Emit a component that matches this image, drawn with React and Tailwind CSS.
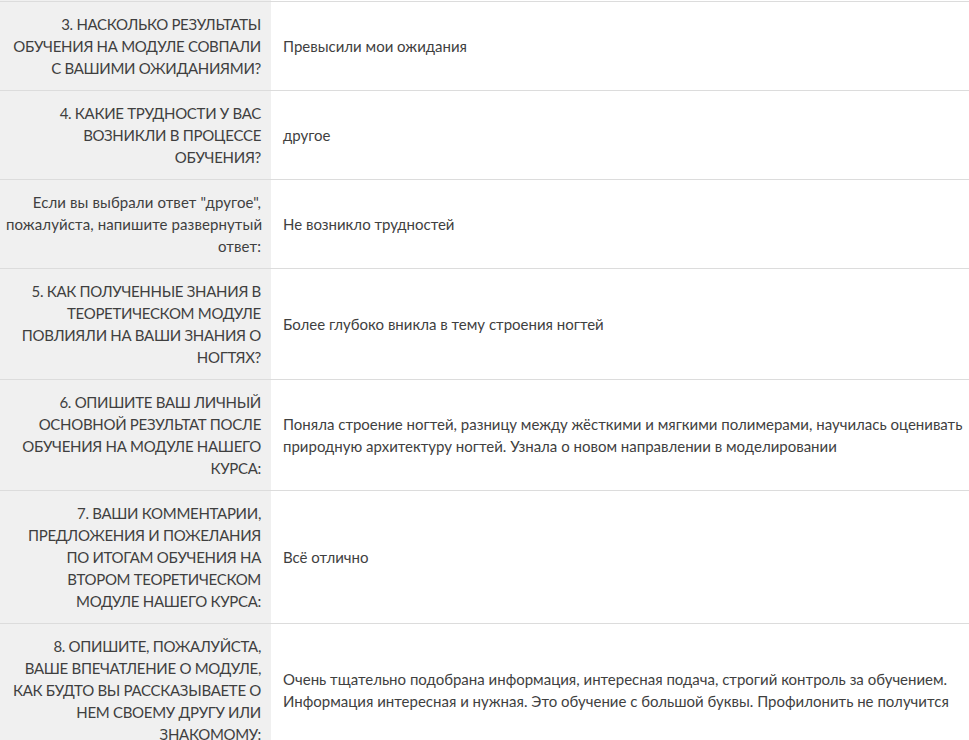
import React from "react";

const rows = [
  {
    q: ["3. НАСКОЛЬКО РЕЗУЛЬТАТЫ", "ОБУЧЕНИЯ НА МОДУЛЕ СОВПАЛИ", "С ВАШИМИ ОЖИДАНИЯМИ?"],
    a: ["Превысили мои ожидания"],
    up: true,
  },
  {
    q: ["4. КАКИЕ ТРУДНОСТИ У ВАС", "ВОЗНИКЛИ В ПРОЦЕССЕ", "ОБУЧЕНИЯ?"],
    a: ["другое"],
    up: true,
  },
  {
    q: ["Если вы выбрали ответ \"другое\",", "пожалуйста, напишите развернутый", "ответ:"],
    a: ["Не возникло трудностей"],
    up: false,
  },
  {
    q: ["5. КАК ПОЛУЧЕННЫЕ ЗНАНИЯ В", "ТЕОРЕТИЧЕСКОМ МОДУЛЕ", "ПОВЛИЯЛИ НА ВАШИ ЗНАНИЯ О", "НОГТЯХ?"],
    a: ["Более глубоко вникла в тему строения ногтей"],
    up: true,
  },
  {
    q: ["6. ОПИШИТЕ ВАШ ЛИЧНЫЙ", "ОСНОВНОЙ РЕЗУЛЬТАТ ПОСЛЕ", "ОБУЧЕНИЯ НА МОДУЛЕ НАШЕГО", "КУРСА:"],
    a: [
      "Поняла строение ногтей, разницу между жёсткими и мягкими полимерами, научилась оценивать",
      "природную архитектуру ногтей. Узнала о новом направлении в моделировании",
    ],
    up: true,
  },
  {
    q: ["7. ВАШИ КОММЕНТАРИИ,", "ПРЕДЛОЖЕНИЯ И ПОЖЕЛАНИЯ", "ПО ИТОГАМ ОБУЧЕНИЯ НА", "ВТОРОМ ТЕОРЕТИЧЕСКОМ", "МОДУЛЕ НАШЕГО КУРСА:"],
    a: ["Всё отлично"],
    up: true,
  },
  {
    q: ["8. ОПИШИТЕ, ПОЖАЛУЙСТА,", "ВАШЕ ВПЕЧАТЛЕНИЕ О МОДУЛЕ,", "КАК БУДТО ВЫ РАССКАЗЫВАЕТЕ О", "НЕМ СВОЕМУ ДРУГУ ИЛИ", "ЗНАКОМОМУ:"],
    a: [
      "Очень тщательно подобрана информация, интересная подача, строгий контроль за обучением.",
      "Информация интересная и нужная. Это обучение с большой буквы. Профилонить не получится",
    ],
    up: true,
  },
];

export default function App() {
  return (
    <div className="w-[969px] h-[740px] overflow-hidden bg-white font-['Lato',sans-serif] text-[15px] leading-[22px] text-[#3f3f3f]">
      <div className="grid grid-cols-[271px_1fr] h-[1px]">
        <div className="bg-[#f0f0f0]" />
        <div />
      </div>
      <div className="border-t border-[#dcdcdc]">
        {rows.map((r, i) => (
          <div key={i} className="grid grid-cols-[271px_1fr] border-b border-[#dcdcdc]">
            <div
              className={
                "bg-[#f0f0f0] pl-[6px] pr-[10px] py-[11px] text-right whitespace-nowrap " +
                (r.up ? "tracking-[-0.3px]" : "tracking-[0.1px]")
              }
            >
              {r.q.map((l, j) => (
                <div key={j}>{l}</div>
              ))}
            </div>
            <div className="flex flex-col justify-center pl-[12px] pr-[2px] py-[11px] whitespace-nowrap">
              {r.a.map((l, j) => (
                <div key={j}>{l}</div>
              ))}
            </div>
          </div>
        ))}
      </div>
    </div>
  );
}
